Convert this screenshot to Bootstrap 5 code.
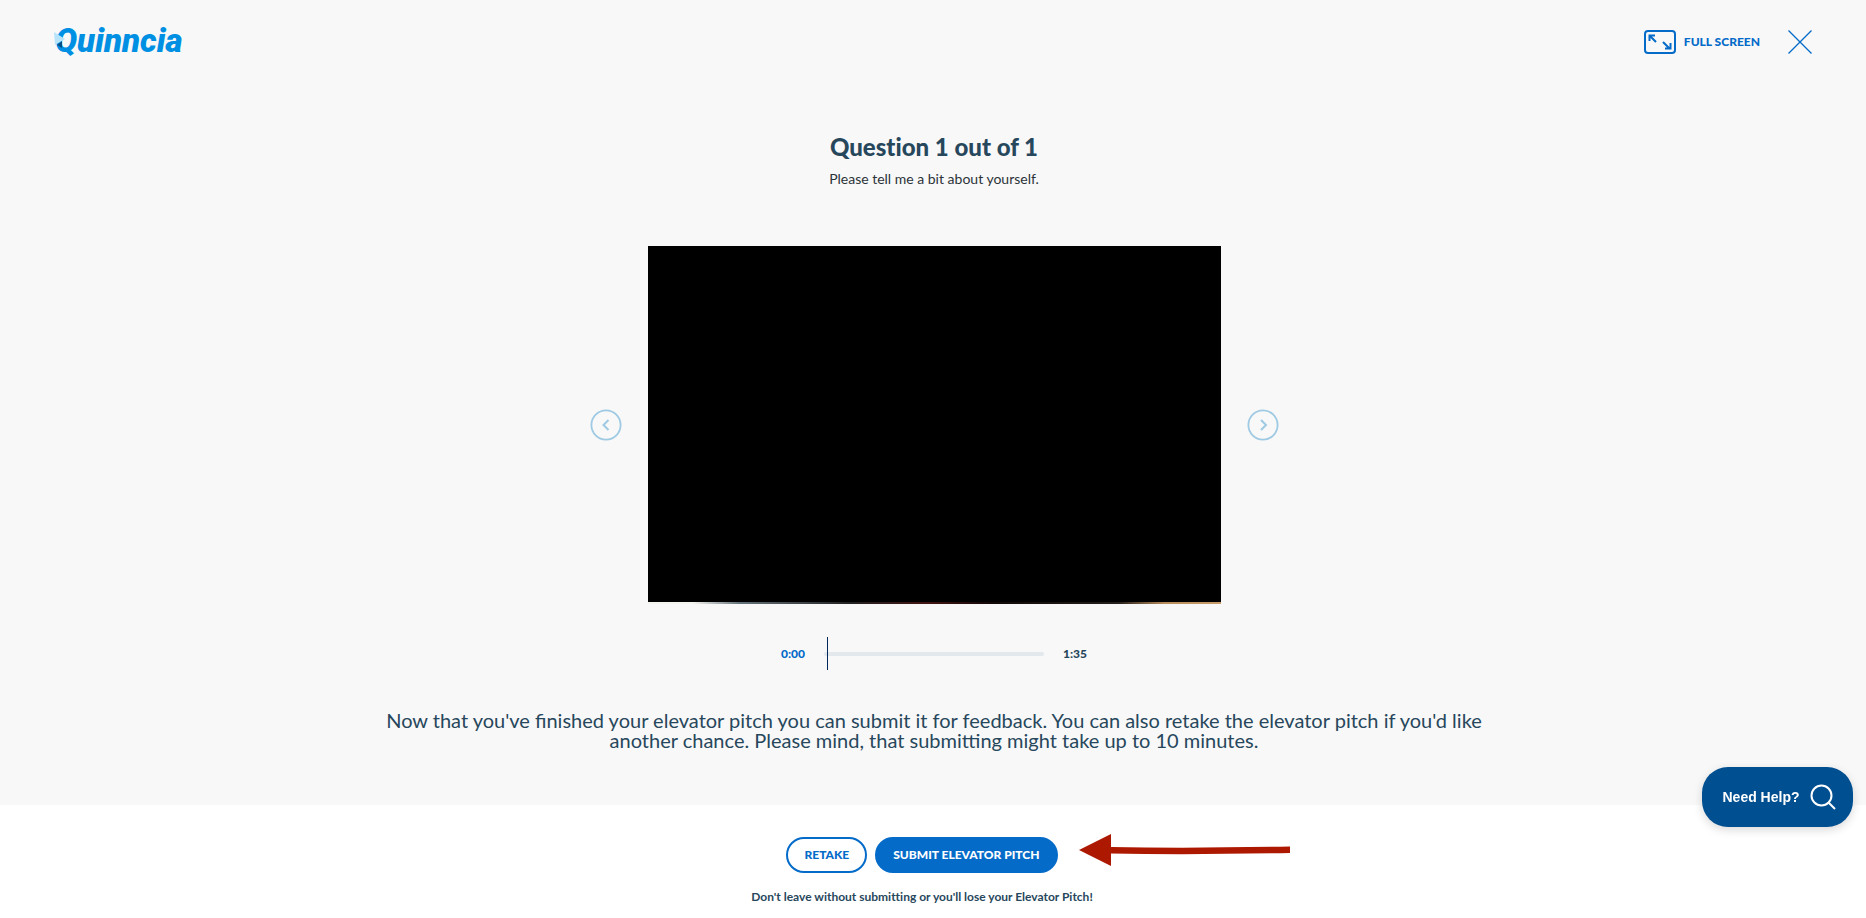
<!DOCTYPE html>
<html lang="en">
<head>
<meta charset="utf-8">
<meta name="viewport" content="width=device-width, initial-scale=1">
<title>Quinncia – Elevator Pitch</title>
<link href="https://cdn.jsdelivr.net/npm/bootstrap@5.3.0/dist/css/bootstrap.min.css" rel="stylesheet">
<style>
  :root { --brand: #046bc9; --ink: #27475c; }
  body { font-family: Lato, "Noto Sans", sans-serif; background: #f8f8f8; color: var(--ink); }
  button, a { color: var(--brand); }
  svg { display: block; }
  .topbar { padding: 17px 54px 0 53px; height: 84px; }
  .brand-logo { position: relative; font: italic 900 33px/48px Roboto, sans-serif; color: #0090e3; padding-left: 2px; }
  .brand-logo svg { position: absolute; left: 1px; top: 15px; }
  .plain { background: none; border: 0; padding: 0; }
  .label-sm { font-size: 12px; line-height: 20px; font-weight: 900; }
  .heavy { font-family: "Lato Black", Lato, sans-serif; font-weight: 900; font-variant-ligatures: none; }
  .elapsed { color: var(--brand); }
  .page-main { padding-left: 2px; }
  .question { padding-top: 47px; }
  .question h1 { font-size: 24px; line-height: 32px; }
  .question p { font-size: 14px; line-height: 20px; color: #2b3338; margin-top: 6px; }
  .player { gap: 26px; margin-top: 57px; }
  .step { color: #9fcae3; }
  .screen { width: 573px; max-width: 70%; aspect-ratio: 573 / 358; background: #000; border-bottom: 2px solid;
    border-image: linear-gradient(90deg, #f4f4ef 8%, #65737b 16%, #222 35%, #421512 49%, #120808 60%, #25201b 82%, #b98c5c 90%, #c99d6b) 1; }
  .timeline { gap: 19px; margin-top: 33px; }
  .track { position: relative; width: 220px; height: 33px; }
  .track input { appearance: none; width: 100%; height: 4px; border-radius: 2px; background: #e3e8ec; margin: 0; display: block; }
  .track input::-webkit-slider-thumb { appearance: none; width: 1px; height: 33px; background: #00285a; margin-left: 3px; }
  .notice { font-size: 20px; line-height: 20px; max-width: 1110px; margin-top: 40px; padding-bottom: 54px; }
  .actions { background: #fff; padding: 32px 22px 0 0; }
  .pill { border: 2px solid var(--brand); border-radius: 18px; height: 36px; font-size: 12px; padding: 0 16px; background: #fff; }
  .pill.filled { background: var(--brand); color: #fff; }
  .button-row { position: relative; }
  .pointer { position: absolute; left: 100%; margin-left: 21px; top: -3px; }
  .warning { font-size: 12px; line-height: 20px; font-weight: 700; font-variant-ligatures: none; margin: 14px 0 11px; }
  .help { position: fixed; right: 13px; bottom: 91px; width: 151px; height: 60px; border: 0; border-radius: 26px; background: #004f91; color: #fff;
    font: bold 14px "Liberation Sans", Arial, sans-serif; gap: 10px; padding: 0 4px 0 7px; box-shadow: 0 3px 10px rgba(0,0,0,.15); }
</style>
</head>
<body class="min-vh-100 d-flex flex-column">
<header class="topbar d-flex justify-content-between align-items-start">
  <a href="#" class="brand-logo text-decoration-none">Quinncia
    <svg width="12" height="17" viewBox="0 0 12 17" aria-hidden="true"><path d="M3 13 8 9v7z" fill="#084f88"/><path d="M0 0 11 7 1 13z" fill="#b7e4fb"/></svg>
  </a>
  <div class="d-flex align-items-center mt-2">
    <button class="plain d-flex align-items-center gap-2 label-sm heavy mt-1">
      <svg width="32" height="26" viewBox="0 0 32 26" fill="none" stroke="currentColor" stroke-width="2"><rect x="1" y="2" width="30" height="22" rx="3"/><path d="M12 13 6 7M5.500 12V6.500H11M19 13l7 7M21 19.500h5.500V14"/></svg>
      FULL SCREEN
    </button>
    <button class="plain ms-4 ps-1 mt-1" aria-label="Close">
      <svg width="24" height="24" viewBox="0 0 24 24" stroke="currentColor" stroke-width="1.300"><path d="M.5.5l23 23m0-23-23 23"/></svg>
    </button>
  </div>
</header>
<main class="page-main flex-grow-1 d-flex flex-column align-items-center text-center">
  <div class="question">
    <h1 class="heavy mb-0">Question 1 out of 1</h1>
    <p class="mb-0">Please tell me a bit about yourself.</p>
  </div>
  <div class="player d-flex justify-content-center align-items-center w-100">
    <button class="plain step" aria-label="Previous question"><svg width="32" height="32" viewBox="0 0 32 32" fill="none" stroke="currentColor" stroke-width="2"><circle cx="16" cy="16" r="14.600" stroke-width="1.800"/><path d="M18.500 11 13.500 16l5 5"/></svg></button>
    <div class="screen" role="img" aria-label="Recorded video"></div>
    <button class="plain step" aria-label="Next question"><svg width="32" height="32" viewBox="0 0 32 32" fill="none" stroke="currentColor" stroke-width="2"><circle cx="16" cy="16" r="14.600" stroke-width="1.800"/><path d="M14 11l5 5-5 5"/></svg></button>
  </div>
  <div class="timeline d-flex align-items-center label-sm">
    <span class="elapsed">0:00</span>
    <div class="track d-flex align-items-center"><input type="range" min="0" max="95" value="0" aria-label="Playback position"></div>
    <span>1:35</span>
  </div>
  <p class="notice mb-0">Now that you've finished your elevator pitch you can submit it for feedback. You can also retake the elevator pitch if you'd like another chance. Please mind, that submitting might take up to 10 minutes.</p>
</main>
<footer class="actions d-flex flex-column align-items-center">
  <div class="button-row d-flex gap-2">
    <button class="pill heavy">RETAKE</button>
    <button class="pill filled heavy">SUBMIT ELEVATOR PITCH</button>
    <svg class="pointer" width="212" height="32" viewBox="0 0 212 32" fill="#ad1800" aria-hidden="true"><path d="M0 16 32 0v13Q110 14.500 211 12.500v6.500Q110 21 32 19.500V32z"/></svg>
  </div>
  <p class="warning">Don't leave without submitting or you'll lose your Elevator Pitch!</p>
</footer>
<button class="help d-flex align-items-center justify-content-center">Need Help?
  <svg width="26" height="26" viewBox="0 0 26 26" fill="none" stroke="currentColor" stroke-width="2"><circle cx="11.500" cy="11.500" r="10"/><path d="m18.500 18.500 6.500 6.500"/></svg>
</button>
<script src="https://cdn.jsdelivr.net/npm/bootstrap@5.3.0/dist/js/bootstrap.bundle.min.js"></script>
</body>
</html>
